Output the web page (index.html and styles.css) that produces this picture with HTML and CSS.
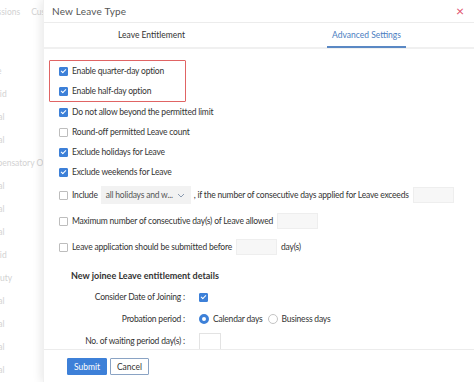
FILE: index.html
```html
<!DOCTYPE html>
<html lang="en">
<head>
    <meta charset="UTF-8">
    <title>New Leave Type</title>
    <link rel="stylesheet" href="styles.css">
</head>
<body>
    <!-- Страница под модальным окном -->
    <aside class="page-behind">
        <nav class="page-tabs">
            <span>Permissions</span>
            <span>Custom</span>
        </nav>
        <ul class="type-list">
            <li>Leave</li>
            <li>Unpaid</li>
            <li>Casual</li>
            <li>Casual</li>
            <li>Compensatory Off</li>
            <li>Casual</li>
            <li>Casual</li>
            <li>Casual</li>
            <li>Unpaid</li>
            <li>On Duty</li>
            <li>Casual</li>
            <li>Casual</li>
            <li>Casual</li>
            <li>Casual</li>
        </ul>
    </aside>

    <section class="modal">
        <div class="modal-header">
            <h2>New Leave Type</h2>
            <span class="close">&times;</span>
        </div>

        <div class="tabs">
            <div class="tab"><span>Leave Entitlement</span></div>
            <div class="tab active"><span>Advanced Settings</span></div>
        </div>

        <div class="modal-body">
            <div class="highlight">
                <label class="option"><span class="check checked"></span>Enable quarter-day option</label>
                <label class="option"><span class="check checked"></span>Enable half-day option</label>
            </div>
            <div class="options">
                <label class="option"><span class="check checked"></span>Do not allow beyond the permitted limit</label>
                <label class="option"><span class="check"></span>Round-off permitted Leave count</label>
                <label class="option"><span class="check checked"></span>Exclude holidays for Leave</label>
                <label class="option"><span class="check checked"></span>Exclude weekends for Leave</label>

                <div class="option field-row">
                    <span class="check"></span>Include
                    <span class="select">all holidays and w...
                        <svg width="8" height="5" viewBox="0 0 8 5"><path d="M1 1l3 3 3-3" fill="none" stroke="#8a9ab0" stroke-width="1"/></svg>
                    </span>
                    , if the number of consecutive days applied for Leave exceeds
                    <span class="input"></span>
                </div>
                <div class="option field-row">
                    <span class="check"></span>Maximum number of consecutive day(s) of Leave allowed
                    <span class="input"></span>
                </div>
                <div class="option field-row">
                    <span class="check"></span>Leave application should be submitted before
                    <span class="input"></span>
                    day(s)
                </div>
            </div>

            <h3 class="section-title">New joinee Leave entitlement details</h3>
            <div class="form-grid">
                <span class="form-label">Consider Date of Joining :</span>
                <span class="form-value"><span class="check checked"></span></span>

                <span class="form-label">Probation period :</span>
                <span class="form-value">
                    <span class="radio selected"></span>Calendar days
                    <span class="radio"></span>Business days
                </span>

                <span class="form-label">No. of waiting period day(s) :</span>
                <span class="form-value"><span class="input small"></span></span>
            </div>
        </div>

        <div class="modal-footer">
            <button class="btn btn-primary">Submit</button>
            <button class="btn btn-default">Cancel</button>
        </div>
    </section>
</body>
</html>
```

FILE: styles.css
```css
:root {
    --blue: #3d80d8;
    --blue-text: #4a7dbf;
    --text: #333;
    --line: #ececec;
}

* {
    margin: 0;
    padding: 0;
    box-sizing: border-box;
}

body {
    font-family: 'Lato', 'Liberation Sans', sans-serif;
    font-size: 8.5px;
    color: var(--text);
    background-color: #fff;
    height: 382px;
    display: flex;
    overflow: hidden;
}

/* Страница на фоне */
.page-behind {
    width: 43px;
    flex-shrink: 0;
    overflow: hidden;
    color: #d2d2d2;
    white-space: nowrap;
}

.page-tabs {
    display: flex;
    gap: 11px;
    margin-left: -24px;
    height: 24px;
    align-items: center;
}

.type-list {
    list-style: none;
    margin-left: -20px;
    padding-top: 36px;
}

.type-list li {
    height: 23px;
    line-height: 23px;
}

/* Модальное окно */
.modal {
    flex: 1;
    display: flex;
    flex-direction: column;
    background-color: #fff;
    box-shadow: -3px 0 8px rgba(0, 0, 0, 0.08);
    border-left: 1px solid #f0f0f0;
}

.modal-header {
    height: 23px;
    padding: 0 10px 0 8px;
    display: flex;
    justify-content: space-between;
    align-items: center;
    border-bottom: 1px solid var(--line);
}

.modal-header h2 {
    font-size: 10px;
    font-weight: 400;
    color: #555;
    letter-spacing: 0.2px;
}

.close {
    color: #e0506a;
    font-size: 14px;
    line-height: 1;
}

.tabs {
    display: flex;
    height: 26px;
    border-bottom: 2px solid #f0f0f0;
}

.tab {
    flex: 1;
    display: flex;
    justify-content: center;
}

.tab span {
    display: flex;
    align-items: center;
    padding: 0 5px;
    border-bottom: 2px solid transparent;
    margin-bottom: -1px;
    font-size: 8.5px;
}

.tab.active span {
    color: var(--blue-text);
    border-bottom-color: #5a88c4;
}

.modal-body {
    flex: 1;
    padding: 11px 0 0 5px;
    overflow: hidden;
    letter-spacing: -0.2px;
}

.highlight {
    width: 137px;
    border: 1px solid #e06464;
    border-radius: 1px;
    padding-left: 9px;
}

.options {
    padding-left: 10px;
}

.option {
    display: flex;
    align-items: center;
    height: 20px;
    white-space: nowrap;
}

.field-row {
    height: 26px;
}

.check {
    width: 9px;
    height: 9px;
    border: 1px solid #bdbdbd;
    border-radius: 1px;
    margin-right: 4px;
    flex-shrink: 0;
    position: relative;
    background-color: #fff;
}

.check.checked {
    background-color: var(--blue);
    border-color: var(--blue);
}

.check.checked::after {
    content: '';
    position: absolute;
    left: 2px;
    top: 0;
    width: 2px;
    height: 4px;
    border: solid #fff;
    border-width: 0 1px 1px 0;
    transform: rotate(45deg);
}

.select {
    display: inline-flex;
    align-items: center;
    justify-content: space-between;
    width: 90px;
    height: 18px;
    padding: 0 6px 0 5px;
    margin: 0 3px;
    background-color: #f2f2f2;
    color: #555;
}

.input {
    display: inline-block;
    width: 41px;
    height: 16px;
    margin: 0 4px;
    background-color: #f7f7f7;
    border: 1px solid #eeeeee;
}

.section-title {
    font-size: 9px;
    font-weight: 700;
    padding-left: 22px;
    margin-top: 6px;
    height: 20px;
    line-height: 20px;
    letter-spacing: 0;
}

.form-grid {
    display: grid;
    grid-template-columns: 136px 1fr;
    column-gap: 14px;
    grid-auto-rows: 22px;
}

.form-label {
    display: flex;
    align-items: center;
    justify-content: flex-end;
    white-space: nowrap;
}

.form-value {
    display: flex;
    align-items: center;
    white-space: nowrap;
}

.radio {
    width: 10px;
    height: 10px;
    border-radius: 50%;
    border: 1px solid #c4c4c4;
    margin-right: 4px;
    background-color: #fff;
}

.radio.selected {
    border: 3px solid var(--blue);
}

.form-value .radio:not(.selected) {
    margin-left: 5px;
}

.input.small {
    width: 22px;
    height: 20px;
    margin: 3px 0 0;
    background-color: #fff;
    border-color: #e3e3e3;
}

.modal-footer {
    height: 33px;
    border-top: 1px solid var(--line);
    padding: 8px 0 0 23px;
    display: flex;
    gap: 3px;
    align-items: flex-start;
}

.btn {
    font-family: inherit;
    font-size: 8.5px;
    height: 17px;
    padding: 0;
    cursor: pointer;
    border-radius: 1px;
}

.btn-primary {
    background-color: var(--blue);
    color: #fff;
    border: 1px solid var(--blue);
    width: 40px;
}

.btn-default {
    background-color: #fff;
    color: var(--text);
    border: 1px solid #8aa3c4;
    width: 39px;
}
```
